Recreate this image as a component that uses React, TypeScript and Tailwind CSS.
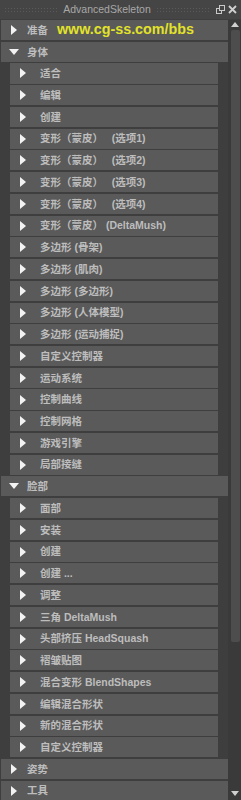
import React from "react";

type Row = { label: string; open?: boolean; children?: string[] };

const BODY = [
  "适合",
  "编辑",
  "创建",
  "变形（蒙皮）   (选项1)",
  "变形（蒙皮）   (选项2)",
  "变形（蒙皮）   (选项3)",
  "变形（蒙皮）   (选项4)",
  "变形（蒙皮） (DeltaMush)",
  "多边形 (骨架)",
  "多边形 (肌肉)",
  "多边形 (多边形)",
  "多边形 (人体模型)",
  "多边形 (运动捕捉)",
  "自定义控制器",
  "运动系统",
  "控制曲线",
  "控制网格",
  "游戏引擎",
  "局部接缝",
];

const FACE = [
  "面部",
  "安装",
  "创建",
  "创建 ...",
  "调整",
  "三角 DeltaMush",
  "头部挤压 HeadSquash",
  "褶皱贴图",
  "混合变形 BlendShapes",
  "编辑混合形状",
  "新的混合形状",
  "自定义控制器",
];

const SECTIONS: Row[] = [
  { label: "准备" },
  { label: "身体", open: true, children: BODY },
  { label: "脸部", open: true, children: FACE },
  { label: "姿势" },
  { label: "工具" },
];

const FONT = { fontFamily: '"Liberation Sans", "Noto Sans CJK SC", sans-serif' };

function RightTri() {
  return (
    <svg width="6" height="10" viewBox="0 0 6 10" className="shrink-0">
      <polygon points="0,0 6,5 0,10" fill="#f2f2f2" />
    </svg>
  );
}

function DownTri() {
  return (
    <svg width="10" height="6" viewBox="0 0 10 6" className="shrink-0">
      <polygon points="0,0 10,0 5,6" fill="#f2f2f2" />
    </svg>
  );
}

function Header({ label, open, children }: { label: string; open?: boolean; children?: React.ReactNode }) {
  return (
    <div className="h-[21.74px] pb-[1.7px] pl-[1px]">
      <div className="relative h-full bg-[#5a5a5a] flex items-center">
        <div className={open ? "w-[26px] pl-[8px] flex" : "w-[26px] pl-[10px] flex"}>
          {open ? <DownTri /> : <RightTri />}
        </div>
        <span className="text-[10.5px] font-bold text-[#bdbdbd] leading-none">{label}</span>
        {children}
      </div>
    </div>
  );
}

function SubRow({ label }: { label: string }) {
  return (
    <div className="h-[21.74px] pb-[1.7px] pl-[10px] pr-[10px]">
      <div className="h-full bg-[#5a5a5a] flex items-center">
        <div className="w-[30px] pl-[10px] flex">
          <RightTri />
        </div>
        <span className="text-[10.5px] font-bold text-[#bdbdbd] leading-none whitespace-pre">{label}</span>
      </div>
    </div>
  );
}

export default function App() {
  return (
    <div className="w-[241px] h-[800px] bg-[#3e3e3e] overflow-hidden flex flex-col" style={FONT}>
      {/* Title bar */}
      <div className="h-[19px] shrink-0 bg-[#454545] flex items-center px-[4px] gap-[5px]">
        <div className="flex-1 h-[5px] bg-[radial-gradient(#5a5a5a_0.7px,transparent_0.8px)] bg-[length:3px_3px]" />
        <span className="text-[10.5px] text-[#a8a8a8] leading-none">AdvancedSkeleton</span>
        <div className="flex-1 h-[5px] bg-[radial-gradient(#5a5a5a_0.7px,transparent_0.8px)] bg-[length:3px_3px]" />
        <div className="flex items-center gap-[3px] pl-[1px]">
          <svg width="9" height="9" viewBox="0 0 9 9">
            <rect x="0.5" y="3.5" width="5" height="5" fill="none" stroke="#c8c8c8" />
            <rect x="3.5" y="0.5" width="5" height="5" fill="#454545" stroke="#c8c8c8" />
          </svg>
          <svg width="9" height="9" viewBox="0 0 9 9">
            <path d="M1,1 L8,8 M8,1 L1,8" stroke="#d0d0d0" strokeWidth="1.8" />
          </svg>
        </div>
      </div>

      <div className="flex-1 flex pt-[1px]">
        {/* Content */}
        <div className="w-[228px] flex flex-col">
          {SECTIONS.map((s) => (
            <React.Fragment key={s.label}>
              <Header label={s.label} open={s.open}>
                {s.label === "准备" && (
                  <span className="absolute left-[56px] top-[2px] text-[14.3px] font-bold text-[#e2e22a] leading-none">
                    www.cg-ss.com/bbs
                  </span>
                )}
              </Header>
              {s.children?.map((c, i) => <SubRow key={s.label + i} label={c} />)}
            </React.Fragment>
          ))}
        </div>

        {/* Scrollbar */}
        <div className="w-[13px] bg-[#3a3a3a] flex flex-col items-center pl-[1px]">
          <svg width="8" height="5" viewBox="0 0 8 5" className="mt-[2px]">
            <polygon points="0,5 8,5 4,0" fill="#cfcfcf" />
          </svg>
          <div className="w-[9px] h-[612px] mt-[3px] bg-[#4d4d4d] rounded-[2px]" />
          <div className="flex-1" />
          <svg width="8" height="5" viewBox="0 0 8 5" className="mb-[6px]">
            <polygon points="0,0 8,0 4,5" fill="#cfcfcf" />
          </svg>
        </div>
      </div>
    </div>
  );
}
